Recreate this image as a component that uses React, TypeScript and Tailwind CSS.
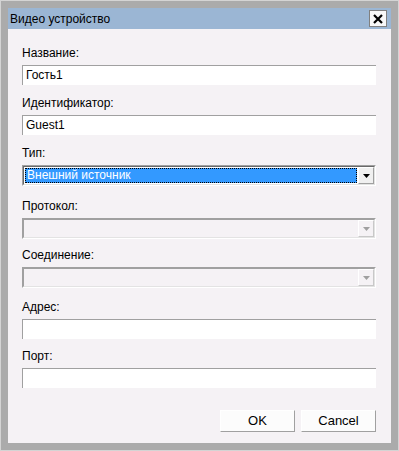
const font = { fontFamily: '"Liberation Sans", Arial, sans-serif' };

function Arrow({ disabled }: { disabled?: boolean }) {
  return (
    <svg width="7" height="4" viewBox="0 0 7 4">
      <path d="M0 0h7L3.5 4z" fill={disabled ? "#a0a0a0" : "#000"} />
    </svg>
  );
}

function TextBox({ value }: { value?: string }) {
  return (
    <div className="h-[20px] w-[354px] bg-white border-t border-l border-[#a0a0a0] pl-[3px] text-[12px] leading-[19px] text-black">
      {value}
    </div>
  );
}

function Select({ value, disabled }: { value?: string; disabled?: boolean }) {
  return (
    <div className="h-[21px] w-[354px] border-t border-l border-[#a0a0a0] border-b border-r border-b-white border-r-white">
      <div
        className={
          "flex h-full items-stretch border-t border-l border-b border-r " +
          (disabled
            ? "border-t-[#a0a0a0] border-l-[#a0a0a0] border-b-[#e3e3e3] border-r-[#e3e3e3] bg-[#f5f2f5]"
            : "border-t-[#696969] border-l-[#696969] border-b-[#e3e3e3] border-r-[#e3e3e3] bg-white")
        }
      >
        <div className="flex-1 p-[1px]">
          {value && (
            <div className="h-full bg-[#3399ff] border border-dotted border-black pl-[1px] text-[12px] leading-[13px] text-white">
              {value}
            </div>
          )}
        </div>
        <div
          className={
            "flex w-[16px] items-center justify-center border " +
            (disabled
              ? "border-t-white border-l-white border-b-[#c8c8c8] border-r-[#c8c8c8] bg-[#f5f2f5]"
              : "border-t-white border-l-white border-b-[#a0a0a0] border-r-[#a0a0a0] bg-[#f0f0f0]")
          }
        >
          <Arrow disabled={disabled} />
        </div>
      </div>
    </div>
  );
}

const fields = [
  { label: "Название:", kind: "text", value: "Гость1", mt: "mt-[17px]" },
  { label: "Идентификатор:", kind: "text", value: "Guest1", mt: "mt-[11px]" },
  { label: "Тип:", kind: "select", value: "Внешний источник", mt: "mt-[11px]" },
  { label: "Протокол:", kind: "disabled", value: "", mt: "mt-[13px]" },
  { label: "Соединение:", kind: "disabled", value: "", mt: "mt-[9px]" },
  { label: "Адрес:", kind: "text", value: "", mt: "mt-[12px]" },
  { label: "Порт:", kind: "text", value: "", mt: "mt-[10px]" },
];

export default function App() {
  return (
    <div style={font} className="w-[399px] h-[451px] bg-[#ababab] border border-[#d4d4d4] p-[7px]">
      <div className="flex h-full flex-col">
        <div className="flex h-[21px] items-center justify-between bg-[#9bb6d4] pl-[2px] pr-[4px]">
          <span className="text-[12px] text-black">Видео устройство</span>
          <div className="flex h-[17px] w-[18px] items-center justify-center border border-[#808080] bg-[#f8f8f8]">
            <svg width="10" height="10" viewBox="0 0 10 10">
              <path d="M1 1l8 8M9 1l-8 8" stroke="#000" strokeWidth="2.2" />
            </svg>
          </div>
        </div>
        <div className="flex flex-1 flex-col bg-[#f5f2f5] pl-[14px]">
          {fields.map((f) => (
            <div key={f.label} className={f.mt}>
              <div className="h-[14px] text-[12px] leading-[14px] text-black">{f.label}</div>
              <div className="mt-[5px]">
                {f.kind === "text" && <TextBox value={f.value} />}
                {f.kind === "select" && <Select value={f.value} />}
                {f.kind === "disabled" && <Select disabled />}
              </div>
            </div>
          ))}
          <div className="mt-[22px] flex justify-end gap-[6px] pr-[15px]">
            <button className="h-[22px] w-[75px] border border-t-white border-l-white border-b-[#a0a0a0] border-r-[#a0a0a0] bg-[#fcfcfc] text-[13px] text-black">
              OK
            </button>
            <button className="h-[22px] w-[75px] border border-t-white border-l-white border-b-[#a0a0a0] border-r-[#a0a0a0] bg-[#fcfcfc] text-[13px] text-black">
              Cancel
            </button>
          </div>
        </div>
      </div>
    </div>
  );
}
